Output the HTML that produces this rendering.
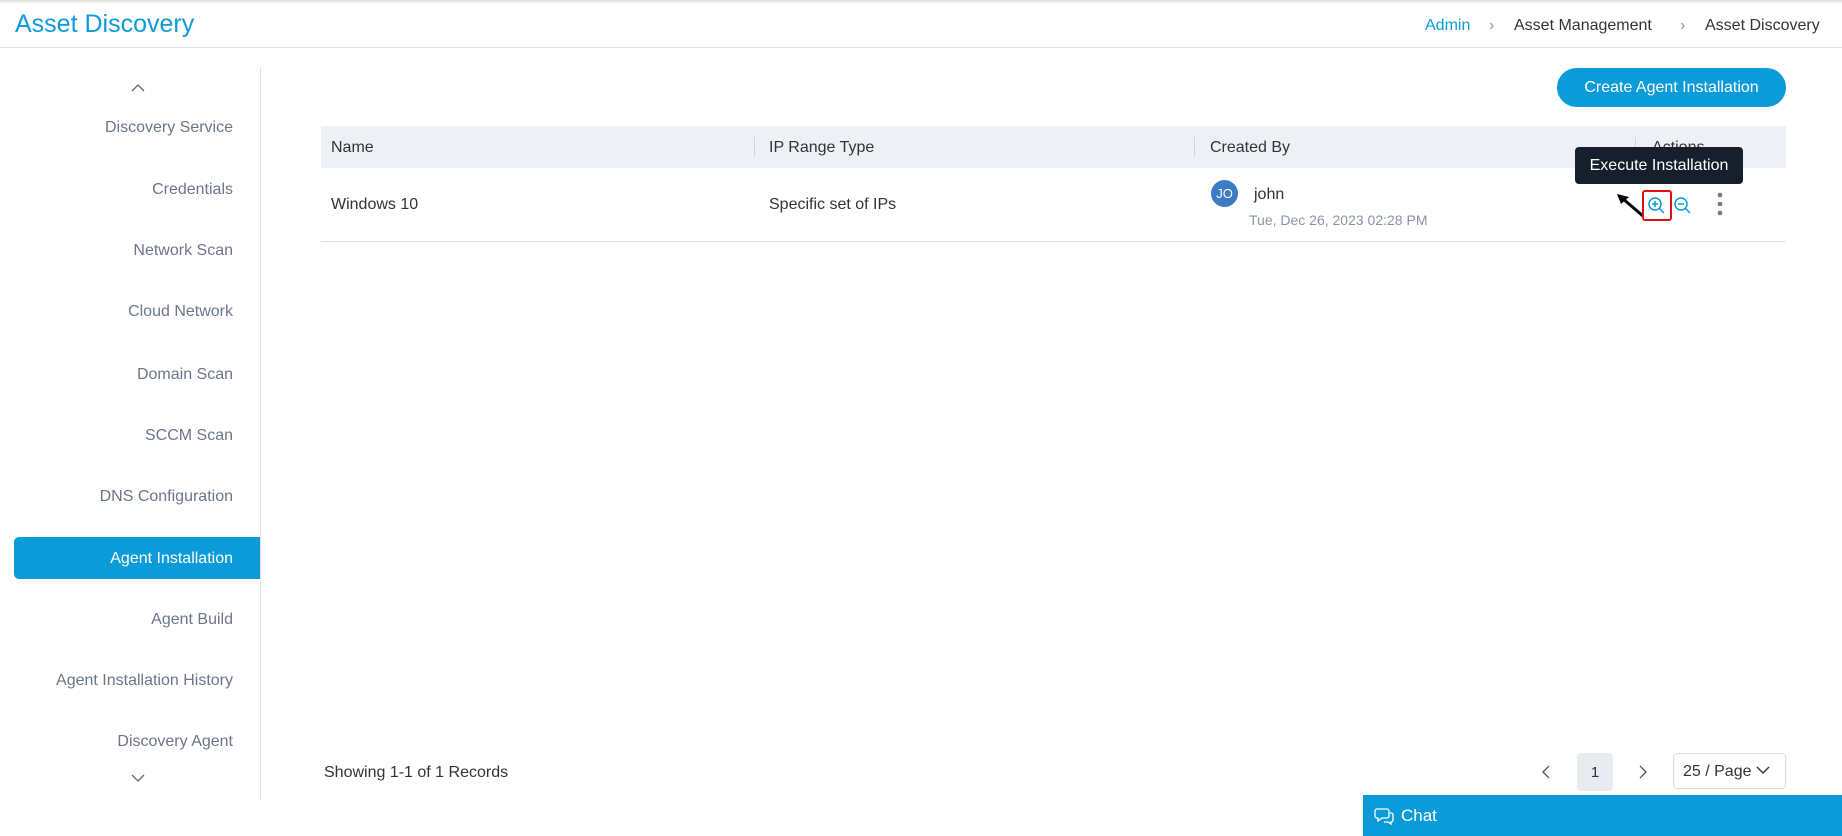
<!DOCTYPE html>
<html><head><meta charset="utf-8"><style>
*{box-sizing:border-box;margin:0;padding:0}
body{width:1842px;height:836px;position:relative;background:#fff;font-family:"Liberation Sans",sans-serif;color:#222;overflow:hidden}
.a{position:absolute;white-space:nowrap}
.side{right:calc(1842px - 233px);font-size:16px;color:#6b7689;text-align:right}
.hd{font-size:16px;color:#333;top:139px}
.sep{position:absolute;width:1px;background:#cfd4dc;top:137px;height:20px}
</style></head><body>
<div class="a" style="left:0;top:0;width:1842px;height:4px;background:linear-gradient(#ddd,#fff)"></div>
<div class="a" style="left:15px;top:10px;font-size:25px;color:#0b9bd8">Asset Discovery</div>
<div class="a" style="left:1425px;top:17px;font-size:16px;color:#0b9bd8">Admin</div>
<div class="a" style="left:1489px;top:17px;font-size:16px;color:#999">›</div>
<div class="a" style="left:1514px;top:17px;font-size:16px;color:#333">Asset Management</div>
<div class="a" style="left:1680px;top:17px;font-size:16px;color:#999">›</div>
<div class="a" style="left:1705px;top:17px;font-size:16px;color:#333">Asset Discovery</div>
<div class="a" style="left:0;top:47px;width:1842px;height:1px;background:#dde2ea"></div>
<div class="a" style="left:260px;top:67px;width:1px;height:733px;background:#dde2ea"></div>
<svg class="a" style="left:131px;top:83px" width="14" height="9"><path d="M1 8L7 2L13 8" fill="none" stroke="#666" stroke-width="1.3"/></svg>
<svg class="a" style="left:131px;top:774px" width="14" height="9"><path d="M1 1L7 7L13 1" fill="none" stroke="#666" stroke-width="1.3"/></svg>
<div class="a side" style="top:119px">Discovery Service</div>
<div class="a side" style="top:181px">Credentials</div>
<div class="a side" style="top:242px">Network Scan</div>
<div class="a side" style="top:303px">Cloud Network</div>
<div class="a side" style="top:366px">Domain Scan</div>
<div class="a side" style="top:427px">SCCM Scan</div>
<div class="a side" style="top:488px">DNS Configuration</div>
<div class="a" style="left:14px;top:537px;width:246px;height:42px;background:#0b9bd8;border-radius:5px 0 0 5px"></div>
<div class="a side" style="top:550px;color:#fff">Agent Installation</div>
<div class="a side" style="top:611px">Agent Build</div>
<div class="a side" style="top:672px">Agent Installation History</div>
<div class="a side" style="top:733px">Discovery Agent</div>
<div class="a" style="left:1557px;top:68px;width:229px;height:39px;background:#0b9bd8;border-radius:20px;color:#fff;font-size:16px;text-align:center;line-height:40px">Create Agent Installation</div>
<div class="a" style="left:321px;top:126px;width:1465px;height:42px;background:#edf0f5"></div>
<div class="a hd" style="left:331px">Name</div>
<div class="sep" style="left:754px"></div>
<div class="a hd" style="left:769px">IP Range Type</div>
<div class="sep" style="left:1194px"></div>
<div class="a hd" style="left:1210px">Created By</div>
<div class="sep" style="left:1635px"></div>
<div class="a hd" style="left:1652px">Actions</div>
<div class="a" style="left:321px;top:241px;width:1465px;height:1px;background:#dde2ea"></div>
<div class="a" style="left:331px;top:196px;font-size:16px;color:#333">Windows 10</div>
<div class="a" style="left:769px;top:196px;font-size:16px;color:#333">Specific set of IPs</div>
<div class="a" style="left:1211px;top:180px;width:27px;height:27px;border-radius:50%;background:#3b7cc4;color:#fff;font-size:13px;text-align:center;line-height:27px">JO</div>
<div class="a" style="left:1254px;top:186px;font-size:16px;color:#333">john</div>
<div class="a" style="left:1249px;top:212px;font-size:14px;color:#8a93a3">Tue, Dec 26, 2023 02:28 PM</div>
<div class="a" style="left:1575px;top:147px;width:168px;height:37px;background:#16202c;border-radius:4px;color:#fff;font-size:16px;text-align:center;line-height:38px">Execute Installation</div>
<svg class="a" style="left:1600px;top:185px" width="50" height="40"><path d="M43 31L22 13" stroke="#000" stroke-width="3"/><path d="M17 9L29 12L21 19Z" fill="#000"/></svg>
<div class="a" style="left:1642px;top:190px;width:30px;height:31px;border:2.5px solid #e01010;border-radius:3px"></div>
<svg class="a" style="left:1647px;top:196px" width="20" height="20"><circle cx="8" cy="8" r="6" fill="none" stroke="#0b9bd8" stroke-width="1.5"/><path d="M5 8h6M8 5v6M12.5 12.5L17 17" stroke="#0b9bd8" stroke-width="1.5"/></svg>
<svg class="a" style="left:1673px;top:196px" width="20" height="20"><circle cx="8" cy="8" r="6" fill="none" stroke="#0b9bd8" stroke-width="1.5"/><path d="M5 8h6M12.5 12.5L17 17" stroke="#0b9bd8" stroke-width="1.5"/></svg>
<svg class="a" style="left:1715px;top:191px" width="10" height="26"><circle cx="5" cy="4" r="2.3" fill="#777"/><circle cx="5" cy="13" r="2.3" fill="#777"/><circle cx="5" cy="22" r="2.3" fill="#777"/></svg>
<div class="a" style="left:324px;top:764px;font-size:16px;color:#333">Showing 1-1 of 1 Records</div>
<svg class="a" style="left:1541px;top:765px" width="10" height="14"><path d="M8 1L2 7L8 13" fill="none" stroke="#555" stroke-width="1.3"/></svg>
<div class="a" style="left:1577px;top:753px;width:36px;height:38px;background:#e8ebf0;border-radius:4px;text-align:center;line-height:40px;font-size:15px;color:#333">1</div>
<svg class="a" style="left:1638px;top:765px" width="10" height="14"><path d="M2 1L8 7L2 13" fill="none" stroke="#555" stroke-width="1.3"/></svg>
<div class="a" style="left:1673px;top:753px;width:113px;height:36px;border:1px solid #d8dde5;border-radius:4px;font-size:16px;color:#333;line-height:36px;padding-left:9px">25 / Page</div>
<svg class="a" style="left:1756px;top:766px" width="14" height="9"><path d="M1 1L7 7L13 1" fill="none" stroke="#333" stroke-width="1.4"/></svg>
<div class="a" style="left:1363px;top:795px;width:479px;height:41px;background:#0b9bd8"></div>
<svg class="a" style="left:1374px;top:807px" width="20" height="18"><path d="M3 2h10a2 2 0 0 1 2 2v5a2 2 0 0 1-2 2H8l-4 3v-3H3a2 2 0 0 1-2-2V4a2 2 0 0 1 2-2z" fill="none" stroke="#fff" stroke-width="1.3"/><path d="M16 6h1a2 2 0 0 1 2 2v5a2 2 0 0 1-2 2v2l-3-2h-4" fill="none" stroke="#fff" stroke-width="1.3"/></svg>
<div class="a" style="left:1401px;top:806px;font-size:17px;color:#fff">Chat</div>
</body></html>
